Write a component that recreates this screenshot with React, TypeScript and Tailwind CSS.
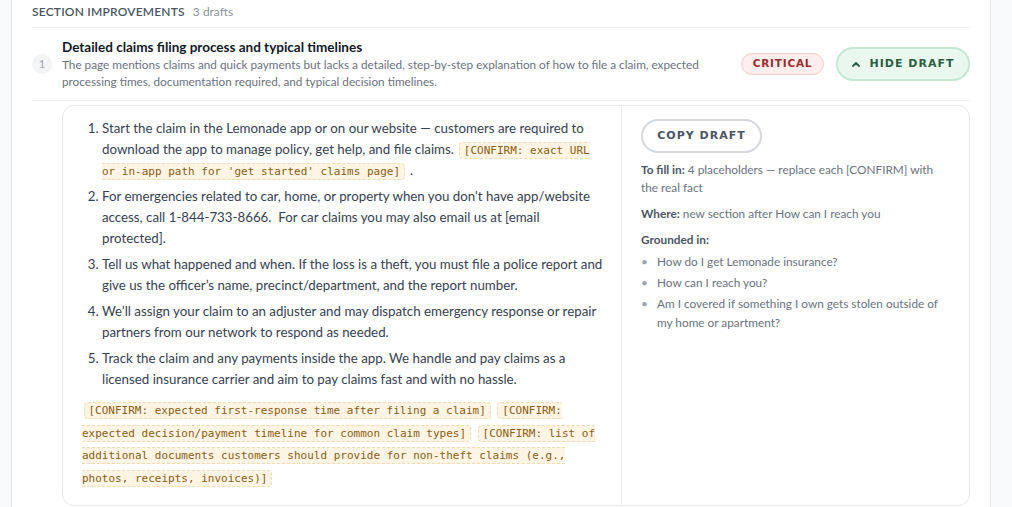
import React from "react";

const LATO = { fontFamily: "Lato, 'Noto Sans', sans-serif" };
const BADGE = { fontFamily: "'DejaVu Sans', Verdana, sans-serif" };

function Chip({ children }: { children: React.ReactNode }) {
  return (
    <span
      className="mx-[1.5px] rounded-[4px] border border-dashed border-[#eedcb8] bg-[#fdf4e4] px-[4px] py-[1px] text-[11px] leading-none text-[#8a5d12]"
      style={{ fontFamily: "'DejaVu Sans Mono', 'Liberation Mono', monospace" }}
    >
      {children}
    </span>
  );
}

const STEPS: React.ReactNode[] = [
  <>
    Start the claim in the Lemonade app or on our website — customers are required to download the app to manage
    policy, get help, and file claims.{" "}
    <Chip>[CONFIRM: exact URL or in-app path for 'get started' claims page]</Chip> .
  </>,
  <>
    For emergencies related to car, home, or property when you don't have app/website access, call 1-844-733-8666.&nbsp;
    For car claims you may also email us at [email protected].
  </>,
  <>
    Tell us what happened and when. If the loss is a theft, you must file a police report and give us the officer’s
    name, precinct/department, and the report number.
  </>,
  <>
    We’ll assign your claim to an adjuster and may dispatch emergency response or repair partners from our network to
    respond as needed.
  </>,
  <>
    Track the claim and any payments inside the app. We handle and pay claims as a licensed insurance carrier and aim
    to pay claims fast and with no hassle.
  </>,
];

const GROUNDED = [
  "How do I get Lemonade insurance?",
  "How can I reach you?",
  "Am I covered if something I own gets stolen outside of my home or apartment?",
];

export default function App() {
  return (
    <div className="flex h-[507px] w-[1012px] overflow-hidden bg-[#f8f9fb]" style={LATO}>
      <div className="w-[12px] shrink-0 border-r border-[#e5e7eb]" />
      <div className="flex-1 bg-white px-[20px]">
        {/* section header */}
        <div className="flex items-baseline gap-[8px] border-b border-[#eceef1] pt-[4px] pb-[8px] leading-[15px]">
          <span className="text-[12px] font-semibold uppercase tracking-[0.2px] text-[#4b5563]">Section improvements</span>
          <span className="text-[12px] text-[#8a919c]">3 drafts</span>
        </div>

        {/* item header */}
        <div className="flex items-center border-b border-[#eceef1] py-[10px]">
          <div className="flex h-[20px] w-[20px] shrink-0 items-center justify-center rounded-full bg-[#f3f4f6] text-[11px] text-[#9ca3af]">
            1
          </div>
          <div className="ml-[10px] min-w-0 flex-1 pr-[18px]">
            <div className="text-[13.5px] font-bold leading-[18px] text-[#111827]">
              Detailed claims filing process and typical timelines
            </div>
            <div className="text-[11.75px] leading-[17px] text-[#6b7280]">
              The page mentions claims and quick payments but lacks a detailed, step-by-step explanation of how to file a
              claim, expected processing times, documentation required, and typical decision timelines.
            </div>
          </div>
          <span
            className="flex h-[22px] w-[83px] shrink-0 items-center justify-center rounded-full border border-[#f5cfcf] bg-[#fdeded] text-[10.5px] font-bold tracking-[0.8px] text-[#9b2c2c]"
            style={BADGE}
          >
            CRITICAL
          </span>
          <button
            className="ml-[12px] flex h-[34px] w-[134px] shrink-0 items-center justify-center gap-[10px] rounded-full border-2 border-[#c6e7d3] bg-[#e9f7ef] text-[11px] font-bold tracking-[1px] text-[#2b5d42]"
            style={BADGE}
          >
            <svg width="8" height="6" viewBox="0 0 8 6" fill="none">
              <path d="M1 5 L4 2 L7 5" stroke="currentColor" strokeWidth="1.8" strokeLinecap="round" strokeLinejoin="round" />
            </svg>
            HIDE DRAFT
          </button>
        </div>

        {/* draft card */}
        <div className="mt-[4px] ml-[30px] flex rounded-xl border border-[#e5e7eb]">
          <div className="min-w-0 flex-1 pt-[12px] pr-[17px] pb-[16px] pl-[19px]">
            <ol className="list-decimal pl-[20px] text-[13.3px] leading-[21px] text-[#374151]">
              {STEPS.map((s, i) => (
                <li key={i} className={i > 0 ? "mt-[5px]" : ""}>
                  {s}
                </li>
              ))}
            </ol>
            <p className="mt-[8px] text-[13.3px] leading-[22.7px] text-[#374151]">
              <Chip>[CONFIRM: expected first-response time after filing a claim]</Chip>{" "}
              <Chip>[CONFIRM: expected decision/payment timeline for common claim types]</Chip>{" "}
              <Chip>
                [CONFIRM: list of additional documents customers should provide for non-theft claims (e.g., photos,
                receipts, invoices)]
              </Chip>
            </p>
          </div>
          <div className="w-[348px] shrink-0 border-l border-[#eceef1] pt-[13px] pr-[24px] pl-[19px] text-[11.8px] text-[#6b7280]">
            <button
              className="flex h-[34px] w-[121px] items-center justify-center rounded-full border-2 border-[#d5d8dd] bg-white text-[11px] font-bold tracking-[1px] text-[#4b5563]"
              style={BADGE}
            >
              COPY DRAFT
            </button>
            <p className="mt-[8px] leading-[18px]">
              <b className="font-bold text-[#4b5563]">To fill in:</b> 4 placeholders — replace each [CONFIRM] with the
              real fact
            </p>
            <p className="mt-[8px] leading-[18px]">
              <b className="font-bold text-[#4b5563]">Where:</b> new section after How can I reach you
            </p>
            <p className="mt-[8px] font-bold leading-[18px] text-[#4b5563]">Grounded in:</p>
            <ul className="mt-[3px]">
              {GROUNDED.map((g) => (
                <li key={g} className="mt-[2px] flex leading-[19px]">
                  <span className="w-[16px] shrink-0 text-[#9ca3af]">•</span>
                  <span>{g}</span>
                </li>
              ))}
            </ul>
          </div>
        </div>
      </div>
      <div className="w-[22px] shrink-0 border-l border-[#e5e7eb]" />
    </div>
  );
}
